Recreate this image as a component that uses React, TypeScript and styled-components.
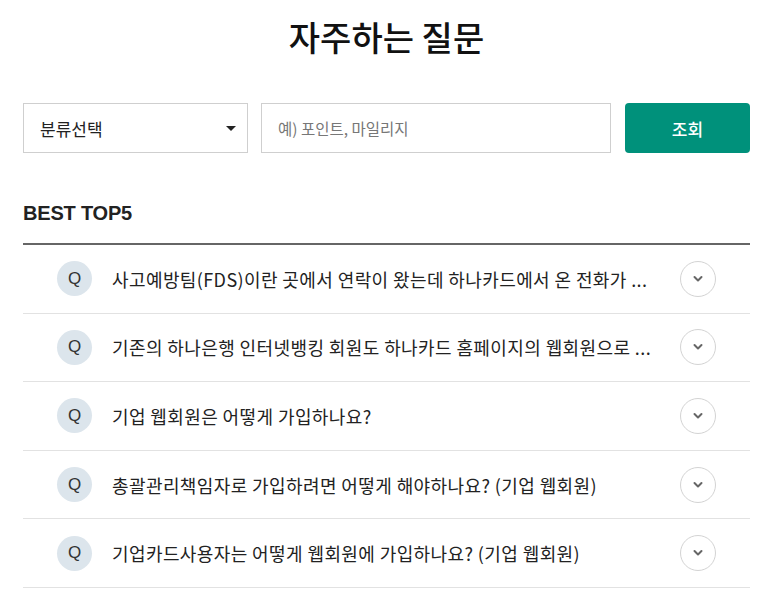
import React, { FC } from 'react'
import styled, { createGlobalStyle } from 'styled-components'

const GlobalStyle = createGlobalStyle`
  html, body {
    margin: 0;
    padding: 0;
    background: #fff;
    font-family: 'Noto Sans CJK KR', 'Noto Sans', sans-serif;
    color: #222;
  }
`

// the list shows a cut-down title for the long ones
const questions = [
  '사고예방팀(FDS)이란 곳에서 연락이 왔는데 하나카드에서 온 전화가 ...',
  '기존의 하나은행 인터넷뱅킹 회원도 하나카드 홈페이지의 웹회원으로 ...',
  '기업 웹회원은 어떻게 가입하나요?',
  '총괄관리책임자로 가입하려면 어떻게 해야하나요? (기업 웹회원)',
  '기업카드사용자는 어떻게 웹회원에 가입하나요? (기업 웹회원)',
]

const Page = styled.div`
  width: 727px;
  margin-left: 23px;
  padding-top: 13px;
`

const Title = styled.h1`
  margin: 0;
  text-align: center;
  font-size: 34px;
  font-weight: 500;
  line-height: 48px;
  color: #111;
`

const SearchRow = styled.div`
  display: flex;
  align-items: center;
  margin-top: 42px;
  height: 50px;
`

const Select = styled.div`
  box-sizing: border-box;
  width: 225px;
  height: 50px;
  border: 1px solid #cfcfcf;
  display: flex;
  align-items: center;
  justify-content: space-between;
  padding: 0 11px 0 16px;
  font-size: 17px;
  color: #222;
`

const Caret = styled.span`
  width: 0;
  height: 0;
  border-left: 5px solid transparent;
  border-right: 5px solid transparent;
  border-top: 5px solid #222;
`

const Input = styled.div`
  box-sizing: border-box;
  width: 350px;
  height: 50px;
  margin-left: 13px;
  border: 1px solid #cfcfcf;
  display: flex;
  align-items: center;
  padding-left: 16px;
  font-size: 15.5px;
  color: #777;
`

const Button = styled.button`
  width: 125px;
  height: 50px;
  margin-left: 14px;
  border: none;
  border-radius: 4px;
  background: #00917b;
  color: #fff;
  font-family: inherit;
  font-size: 17px;
  font-weight: 500;
`

const SectionTitle = styled.h2`
  margin: 46px 0 0;
  font-size: 20px;
  font-weight: 700;
  line-height: 28px;
  color: #222;
  font-family: 'Liberation Sans', Arial, sans-serif;
  letter-spacing: -0.2px;
`

const List = styled.ul`
  list-style: none;
  margin: 16px 0 0;
  padding: 0;
  border-top: 2px solid #666;
`

const Row = styled.li`
  display: flex;
  align-items: center;
  height: 67.6px;
  border-bottom: 1px solid #e2e2e2;
  padding-left: 34px;
`

const QBadge = styled.span`
  flex: none;
  width: 35px;
  height: 35px;
  border-radius: 50%;
  background: #dce5ec;
  display: flex;
  align-items: center;
  justify-content: center;
  font-family: 'Liberation Sans', Arial, sans-serif;
  font-size: 17px;
  color: #333;
`

const QText = styled.span`
  flex: none;
  width: 547px;
  margin-left: 20px;
  font-size: 18px;
  letter-spacing: 0.4px;
  color: #222;
  white-space: nowrap;
`

const Toggle = styled.span`
  flex: none;
  box-sizing: border-box;
  margin-left: 21px;
  width: 36px;
  height: 36px;
  border-radius: 50%;
  border: 1px solid #d3d3d3;
  display: flex;
  align-items: center;
  justify-content: center;
`

const FaqRow: FC<{ text: string }> = ({ text }) => (
  <Row>
    <QBadge>Q</QBadge>
    <QText>{text}</QText>
    <Toggle>
      <svg width="12" height="8" viewBox="0 0 12 8">
        <path d="M2.5 2 L6 5.5 L9.5 2" fill="none" stroke="#666" strokeWidth="2" strokeLinecap="round" strokeLinejoin="round" />
      </svg>
    </Toggle>
  </Row>
)

const App: FC = () => (
  <>
    <GlobalStyle />
    <Page>
      <Title>자주하는 질문</Title>
      <SearchRow>
        <Select>
          분류선택
          <Caret />
        </Select>
        <Input>예) 포인트, 마일리지</Input>
        <Button>조회</Button>
      </SearchRow>
      <SectionTitle>BEST TOP5</SectionTitle>
      <List>
        {questions.map((q) => (
          <FaqRow key={q} text={q} />
        ))}
      </List>
    </Page>
  </>
)

export default App
